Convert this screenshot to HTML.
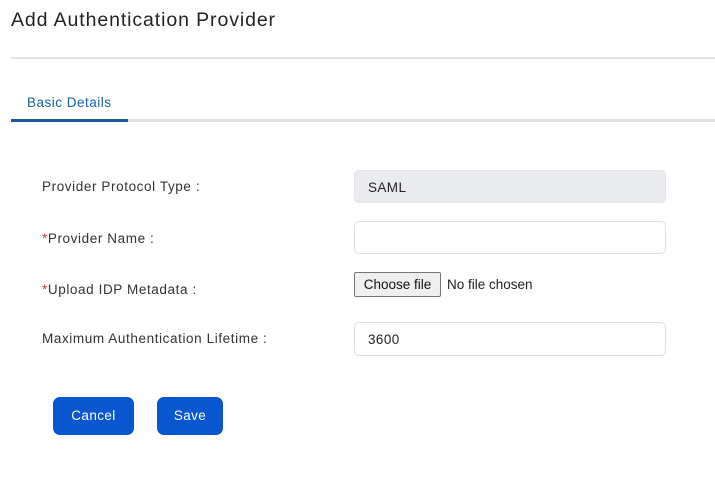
<!DOCTYPE html>
<html><head><style>
body{margin:0;width:715px;height:477px;background:#fff;font-family:"Liberation Sans",sans-serif;position:relative;overflow:hidden}
.a{position:absolute}
.lbl{font-size:13.5px;letter-spacing:0.6px;color:#333;left:42px}
.in{left:354px;width:312px;height:33px;border:1px solid #dcdee2;border-radius:5px;box-sizing:border-box;font-size:13.5px;letter-spacing:0.4px;color:#222;padding:9px 13px}
.btn{background:#0a55d0;color:#fff;font-size:13.5px;letter-spacing:0.4px;border-radius:7px;text-align:center;line-height:38px;height:38px;top:397px}
.r{color:#d33}
</style></head><body>
<div class="a" style="left:11px;top:9px;font-size:19.5px;letter-spacing:0.9px;color:#222">Add Authentication Provider</div>
<div class="a" style="left:11px;top:57px;width:704px;height:2px;background:#e2e2e2"></div>
<div class="a" style="left:27px;top:95px;font-size:13.5px;letter-spacing:0.5px;color:#1a5fa8">Basic Details</div>
<div class="a" style="left:11px;top:119px;width:704px;height:3px;background:#e0e0e0"></div>
<div class="a" style="left:11px;top:119px;width:117px;height:3px;background:#1a5a9a"></div>
<div class="a lbl" style="top:179px">Provider Protocol Type :</div>
<div class="a in" style="top:170px;background:#e9ebee;border-color:#e3e5e8">SAML</div>
<div class="a lbl" style="top:231px"><span class="r">*</span>Provider Name :</div>
<div class="a in" style="top:221px"></div>
<div class="a lbl" style="top:282px"><span class="r">*</span>Upload IDP Metadata :</div>
<div class="a" style="left:354px;top:272px;width:87px;height:25px;box-sizing:border-box;border:1px solid #767676;border-radius:2px;background:#efefef;font-size:13.5px;color:#111;text-align:center;line-height:23px">Choose file</div>
<div class="a" style="left:447px;top:277px;font-size:13.5px;color:#222">No file chosen</div>
<div class="a lbl" style="top:331px">Maximum Authentication Lifetime :</div>
<div class="a in" style="top:322px;height:34px">3600</div>
<div class="a btn" style="left:53px;width:81px">Cancel</div>
<div class="a btn" style="left:157px;width:66px">Save</div>
</body></html>
